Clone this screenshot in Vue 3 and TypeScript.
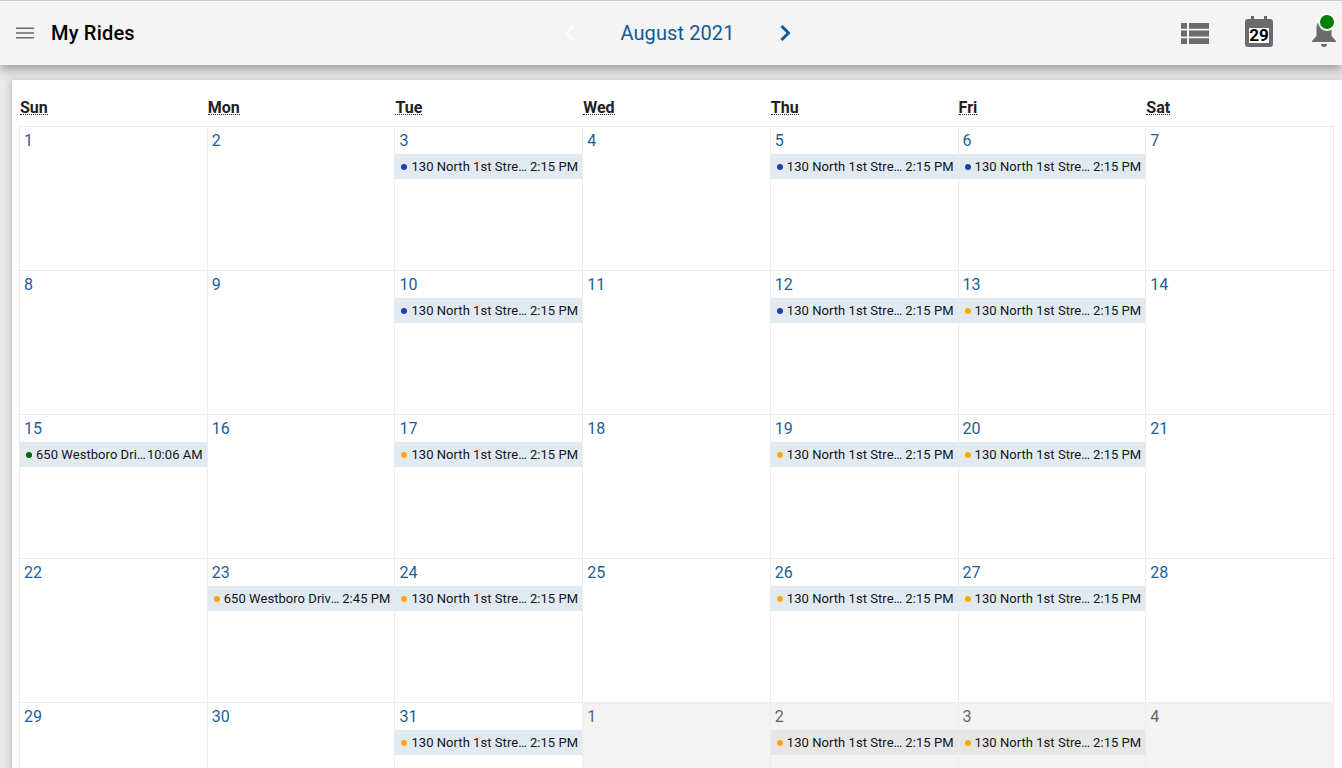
<template>
  <div class="page">
    <header class="toolbar">
      <div class="toolbar-left">
        <svg class="menu-icon" viewBox="0 0 18 12" width="18" height="12" aria-hidden="true">
          <path d="M0 0.5h18v1.6H0zM0 5.2h18v1.6H0zM0 9.9h18v1.6H0z" fill="#6b6b6b" />
        </svg>
        <h1>My Rides</h1>
      </div>
      <div class="month-nav">
        <svg class="chevron" viewBox="0 0 14 20" width="14" height="20" aria-hidden="true">
          <path d="M10.500 3l-7 7 7 7" fill="none" stroke="#fbfbfb" stroke-width="3" />
        </svg>
        <span class="month-label">August 2021</span>
        <svg class="chevron" viewBox="0 0 14 20" width="14" height="20" aria-hidden="true">
          <path d="M3.500 3l7 7-7 7" fill="none" stroke="#0f5a94" stroke-width="3" />
        </svg>
      </div>
      <div class="toolbar-right">
        <svg viewBox="0 0 28 21" width="28" height="21" aria-hidden="true">
          <path
            d="M0 0h6v5.800H0zM8 0h20v5.800H8zM0 7.600h6v5.800H0zM8 7.600h20v5.800H8zM0 15.200h6V21H0zM8 15.200h20V21H8z"
            fill="#6b6b6b"
          />
        </svg>
        <div class="calendar-icon">
          <span class="ring ring-left"></span>
          <span class="ring ring-right"></span>
          <span class="calendar-day">29</span>
        </div>
        <div class="bell">
          <svg viewBox="0 0 26 30" width="26" height="30" aria-hidden="true">
            <path
              d="M13 2c-5 0-7.500 3.800-7.500 8v8L1 23v1h24v-1l-4.500-5v-8c0-4.200-2.500-8-7.500-8zM10 26h6c0 2-1.300 3-3 3s-3-1-3-3z"
              fill="#6b6b6b"
            />
          </svg>
          <span class="bell-dot"></span>
        </div>
      </div>
    </header>

    <main class="calendar">
      <div class="weekdays">
        <abbr v-for="day in weekdays" :key="day">{{ day }}</abbr>
      </div>
      <div class="month-grid">
        <div
          v-for="cell in cells"
          :key="cell.id"
          class="day"
          :class="{ outside: cell.outside }"
        >
          <span class="day-number">{{ cell.date }}</span>
          <div v-if="cell.ride" class="ride">
            <span class="dot" :class="cell.ride.status"></span>
            <span class="ride-title">{{ cell.ride.title }}</span>
            <span class="ride-time">{{ cell.ride.time }}</span>
          </div>
        </div>
      </div>
    </main>
  </div>
</template>

<script setup lang="ts">
type RideStatus = 'blue' | 'orange' | 'green';

interface Ride {
  status: RideStatus;
  title: string;
  time: string;
}

interface DayCell {
  id: string;
  date: number;
  outside: boolean;
  ride?: Ride;
}

const weekdays = ['Sun', 'Mon', 'Tue', 'Wed', 'Thu', 'Fri', 'Sat'];

const north = (status: RideStatus): Ride => ({
  status,
  title: '130 North 1st Street, Hopkinton',
  time: '2:15 PM'
});

const rides: Record<number, Ride> = {
  3: north('blue'),
  5: north('blue'),
  6: north('blue'),
  10: north('blue'),
  12: north('blue'),
  13: north('orange'),
  15: { status: 'green', title: '650 Westboro Drive, Hopkinton', time: '10:06 AM' },
  17: north('orange'),
  19: north('orange'),
  20: north('orange'),
  23: { status: 'orange', title: '650 Westboro Drive, Hopkinton', time: '2:45 PM' },
  24: north('orange'),
  26: north('orange'),
  27: north('orange'),
  31: north('orange')
};

const cells: DayCell[] = [];
for (let date = 1; date <= 31; date++) {
  cells.push({ id: `aug-${date}`, date, outside: false, ride: rides[date] });
}
for (let date = 1; date <= 4; date++) {
  const ride = date === 2 || date === 3 ? north('orange') : undefined;
  cells.push({ id: `sep-${date}`, date, outside: true, ride });
}
</script>

<style>
html,
body {
  overflow: hidden;
  background: #e8e8e8;
}
</style>

<style scoped>
.page {
  height: 768px;
  overflow: hidden;
  font-family: Roboto, "Liberation Sans", sans-serif;
  background: #e8e8e8;
}

.toolbar {
  position: relative;
  z-index: 2;
  height: 65px;
  box-sizing: border-box;
  border-top: 1px solid #c9c9c9;
  background: #f4f4f4;
  box-shadow: 0 4px 10px rgba(0, 0, 0, 0.35);
  display: grid;
  grid-template-columns: 1fr auto 1fr;
  align-items: center;
  padding-left: 16px;
}

.toolbar-left {
  display: flex;
  align-items: center;
  gap: 17px;
}

.toolbar-left h1 {
  margin: 0;
  font-size: 20px;
  font-weight: 500;
  letter-spacing: 0.2px;
  color: #000;
}

.menu-icon {
  display: block;
}

.month-nav {
  display: flex;
  align-items: center;
  gap: 43px;
  margin-left: -3px;
}

.month-label {
  font-size: 20px;
  color: #0f5a94;
  letter-spacing: 0.1px;
}

.chevron {
  display: block;
}

.toolbar-right {
  display: flex;
  align-items: center;
  justify-content: flex-end;
  gap: 36px;
  margin-right: 5px;
}

.calendar-icon {
  position: relative;
  width: 28px;
  height: 28px;
  box-sizing: border-box;
  border: 4px solid #6b6b6b;
  border-top-width: 9px;
  border-radius: 3px;
  background: #fff;
  display: flex;
  align-items: center;
  justify-content: center;
}

.ring {
  position: absolute;
  top: -12px;
  width: 3px;
  height: 5px;
  background: #6b6b6b;
}

.ring-left {
  left: 2px;
}

.ring-right {
  right: 2px;
}

.calendar-day {
  font-size: 17px;
  font-weight: 700;
  line-height: 1;
  color: #000;
}

.bell {
  position: relative;
  width: 26px;
  height: 30px;
  margin-left: 2px;
}

.bell svg {
  display: block;
}

.bell-dot {
  position: absolute;
  top: -5px;
  right: 1px;
  width: 14px;
  height: 14px;
  border-radius: 50%;
  border: 2px solid #fff;
  background: #008000;
}

.calendar {
  margin: 15px 0 0 12px;
  padding: 0 8px 0 7px;
  background: #fff;
  box-shadow: -2px 0 6px rgba(0, 0, 0, 0.15);
}

.weekdays {
  display: grid;
  grid-template-columns: repeat(7, 1fr);
  height: 46px;
  align-items: end;
  padding: 0 0 11px 1px;
  box-sizing: border-box;
}

.weekdays abbr {
  justify-self: start;
  font-size: 16px;
  font-weight: 700;
  line-height: 12px;
  color: #212121;
  text-decoration: none;
  border-bottom: 1px dotted #212121;
}

.month-grid {
  display: grid;
  grid-template-columns: repeat(7, 1fr);
  grid-auto-rows: 144px;
  border-top: 1px solid #ececec;
  border-left: 1px solid #ececec;
}

.day {
  box-sizing: border-box;
  border-right: 1px solid #ececec;
  border-bottom: 1px solid #ececec;
  min-width: 0;
}

.day.outside {
  background: #f3f3f3;
}

.day-number {
  display: block;
  padding: 4px 0 0 4px;
  font-size: 16px;
  line-height: 19px;
  height: 23px;
  color: #1a5f98;
}

.day.outside .day-number {
  color: #5f6368;
}

.ride {
  height: 25px;
  display: flex;
  align-items: center;
  padding: 0 4px 0 6px;
  background: #e1eaf1;
  font-size: 13px;
  letter-spacing: 0.05px;
  color: #141414;
  white-space: nowrap;
}

.day.outside .ride {
  background: #e6e6e6;
}

.dot {
  flex: none;
  width: 6px;
  height: 6px;
  border-radius: 50%;
  margin-right: 4px;
}

.dot.blue {
  background: #1e3fae;
}

.dot.orange {
  background: #ffa500;
}

.dot.green {
  background: #006400;
}

.ride-title {
  flex: 1;
  min-width: 0;
  overflow: hidden;
  text-overflow: ellipsis;
}

.ride-time {
  flex: none;
}
</style>
